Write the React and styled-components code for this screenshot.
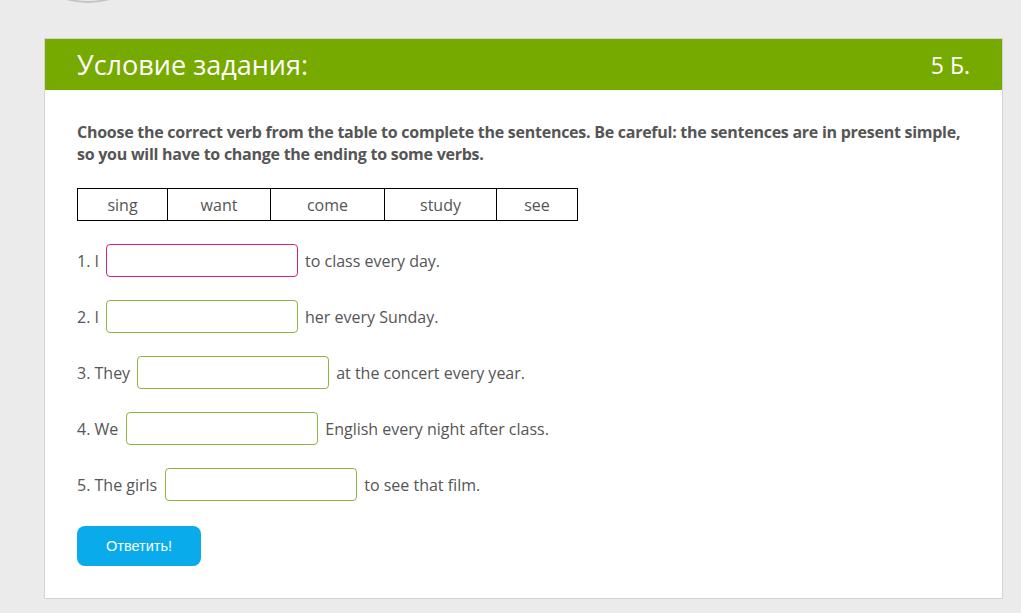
import React from "react";
import styled, { createGlobalStyle } from "styled-components";

const GlobalStyle = createGlobalStyle`
  body {
    margin: 0;
    background: #ebebeb;
    font-family: "Open Sans", "Liberation Sans", sans-serif;
  }
`;

const Page = styled.div`
  width: 1021px;
  height: 613px;
  overflow: hidden;
  padding: 38px 18px 0 44px;
  box-sizing: border-box;
  position: relative;
`;

const AvatarRing = styled.div`
  position: absolute;
  left: 8px;
  top: -157px;
  width: 156px;
  height: 156px;
  border-radius: 50%;
  border: 2px solid #c4c4c4;
`;

const Card = styled.section`
  width: 959px;
  background: #fff;
  border: 1px solid #d4d4d4;
  box-sizing: border-box;
`;

const CardHeader = styled.header`
  height: 51px;
  background: #77aa00;
  color: #fff;
  display: flex;
  align-items: center;
  justify-content: space-between;
  padding: 0 32px;
`;

const Title = styled.h2`
  margin: 0;
  font-size: 27px;
  font-weight: 400;
`;

const Score = styled.span`
  font-size: 23px;
`;

const Body = styled.div`
  padding: 31px 32px 32px;
  color: #555;
`;

const Instruction = styled.p`
  margin: 0 0 23px;
  font-size: 16px;
  font-weight: 700;
  letter-spacing: -0.26px;
  line-height: 22px;
`;

const VerbTable = styled.table`
  border-collapse: collapse;
  margin-bottom: 23px;
`;

const Cell = styled.td`
  border: 1px solid #000;
  height: 31px;
  padding: 0;
  width: ${(p) => p.$w}px;
  text-align: center;
  font-size: 16px;
  color: #555;
`;

const Row = styled.div`
  display: flex;
  align-items: center;
  gap: 7px;
  font-size: 16px;
  height: 33px;
  margin-bottom: 23px;
`;

const Label = styled.span`
  margin-right: ${(p) => (p.$lead ? 1 : 0)}px;
`;

const Gap = styled.input`
  width: 192px;
  height: 33px;
  box-sizing: border-box;
  border: 1px solid ${(p) => (p.$active ? "#d3217f" : "#8db443")};
  border-radius: 4px;
  outline: none;
  background: #fff;
`;

const Submit = styled.button`
  margin-top: 2px;
  width: 124px;
  height: 40px;
  border: none;
  border-radius: 8px;
  background: #0aabeb;
  color: #fff;
  font-family: "Liberation Sans", Arial, sans-serif;
  font-size: 14.5px;
`;

const verbs = [
  ["sing", 89],
  ["want", 102],
  ["come", 113],
  ["study", 111],
  ["see", 80],
];

const sentences = [
  ["1. I", "to class every day."],
  ["2. I", "her every Sunday."],
  ["3. They", "at the concert every year."],
  ["4. We", "English every night after class."],
  ["5. The girls", "to see that film."],
];

export default function App() {
  return (
    <Page>
      <GlobalStyle />
      <AvatarRing />
      <Card>
        <CardHeader>
          <Title>Условие задания:</Title>
          <Score>5 Б.</Score>
        </CardHeader>
        <Body>
          <Instruction>
            Choose the correct verb from the table to complete the sentences. Be
            careful: the sentences are in present simple, so you will have to
            change the ending to some verbs.
          </Instruction>
          <VerbTable>
            <tbody>
              <tr>
                {verbs.map(([v, w]) => (
                  <Cell key={v} $w={w}>
                    {v}
                  </Cell>
                ))}
              </tr>
            </tbody>
          </VerbTable>
          {sentences.map(([before, after], i) => (
            <Row key={i}>
              <Label $lead={i > 2}>{before}</Label>
              <Gap $active={i === 0} />
              <span>{after}</span>
            </Row>
          ))}
          <Submit>Ответить!</Submit>
        </Body>
      </Card>
    </Page>
  );
}
